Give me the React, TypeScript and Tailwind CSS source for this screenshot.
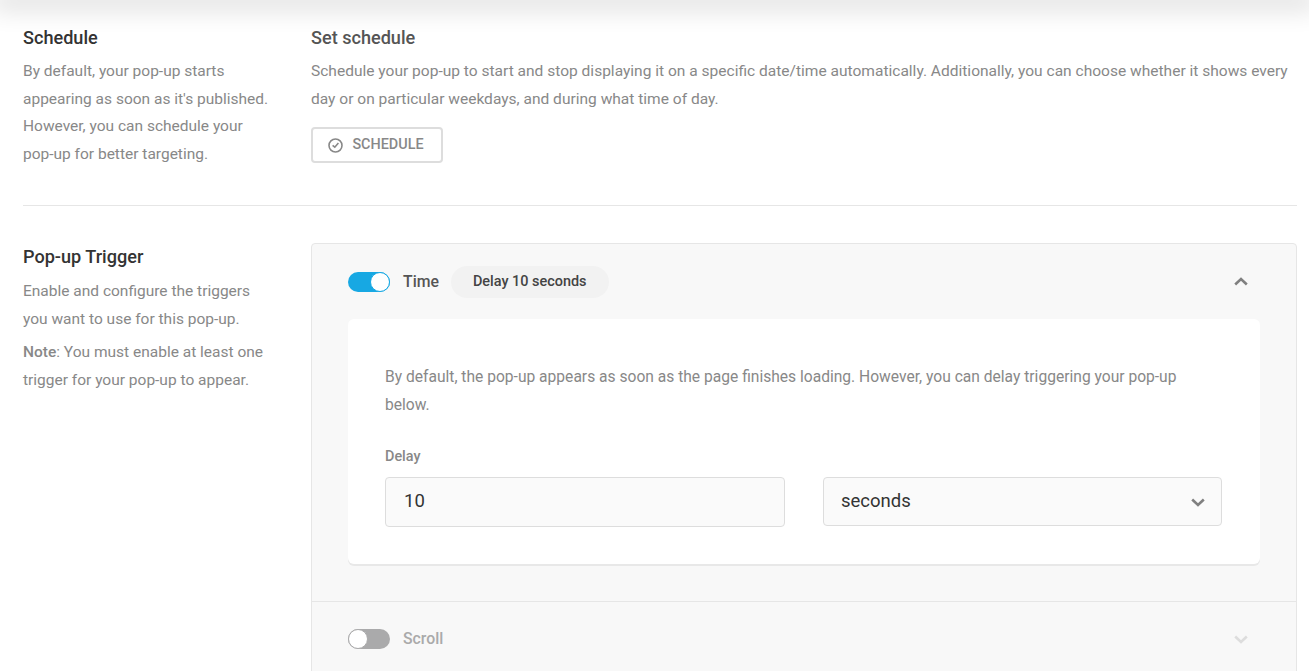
import React from "react";

function Chevron({ up = false, className = "" }: { up?: boolean; className?: string }) {
  return (
    <svg width="14" height="14" viewBox="0 0 14 14" fill="none" className={className}>
      <path d={up ? "M1.2 9.5 L7 4.1 L12.8 9.5" : "M1.2 4.5 L7 9.9 L12.8 4.5"} stroke="currentColor" strokeWidth="2.6" />
    </svg>
  );
}

function Toggle({ on }: { on: boolean }) {
  return (
    <div className={`flex h-5 w-[42px] rounded-full ${on ? "justify-end bg-[#17a8e3]" : "justify-start bg-[#aaaaab]"}`}>
      <div className={`h-5 w-5 rounded-full border bg-white ${on ? "border-[#17a8e3]" : "border-[#aaaaab]"}`} />
    </div>
  );
}

export default function App() {
  return (
    <div className="h-[671px] w-[1309px] overflow-hidden bg-white font-['Roboto',sans-serif]">
      <div className="h-0 w-full shadow-[0_0_26px_8px_rgba(0,0,0,0.16)]" />
      <div className="pl-[23px] pr-3">
        <section className="flex border-b border-[#e6e6e6] pt-[25px] h-[206px]">
          <div className="w-[288px] shrink-0">
            <h2 className="text-[18.1px] leading-[25px] font-medium text-[#333333]">Schedule</h2>
            <p className="mt-[8px] w-[250px] text-[15.5px] leading-[27.5px] text-[#888888]">
              By default, your pop-up starts appearing as soon as it's published. However, you can schedule your pop-up for better targeting.
            </p>
          </div>
          <div className="flex-1">
            <h3 className="text-[18.1px] leading-[25px] font-medium text-[#555555]">Set schedule</h3>
            <p className="mt-[8px] text-[15.54px] leading-[27.5px] text-[#888888]">
              Schedule your pop-up to start and stop displaying it on a specific date/time automatically. Additionally, you can choose whether it shows every day or on particular weekdays, and during what time of day.
            </p>
            <button className="mt-[14px] flex h-9 w-[132px] items-center justify-center gap-[9px] pr-[2px] rounded border-2 border-[#dddddd] bg-white text-[14.4px] font-medium text-[#888888]">
              <svg width="15" height="15" viewBox="0 0 15 15" fill="none" stroke="currentColor" strokeWidth="1.6">
                <circle cx="7.5" cy="7.5" r="6.5" />
                <path d="M4.6 7.4 L6.8 9.2 L10.4 5" />
              </svg>
              SCHEDULE
            </button>
          </div>
        </section>

        <section className="flex pt-[37px]">
          <div className="w-[288px] shrink-0">
            <h2 className="mt-[1px] text-[18.1px] leading-[25px] font-medium text-[#333333]">Pop-up Trigger</h2>
            <p className="mt-[9px] w-[250px] text-[15.5px] leading-[27.5px] text-[#888888]">
              Enable and configure the triggers you want to use for this pop-up.
            </p>
            <p className="mt-[6px] w-[250px] text-[15.5px] leading-[27.5px] text-[#888888]">
              <span className="font-medium">Note</span>: You must enable at least one trigger for your pop-up to appear.
            </p>
          </div>
          <div className="flex-1 rounded-t border border-[#e6e6e6] bg-[#f8f8f8]">
            <div className="border-b border-[#e6e6e6] pl-9 pr-9 pb-[37px]">
              <div className="flex h-[75px] items-center pr-3">
                <Toggle on />
                <span className="ml-[13px] text-[15.8px] font-medium text-[#555555]">Time</span>
                <span className="ml-3 flex h-8 items-center rounded-full bg-[#f2f2f2] px-[22px] text-[14.45px] font-medium text-[#444444]">
                  Delay 10 seconds
                </span>
                <Chevron up className="ml-auto text-[#808080]" />
              </div>
              <div className="h-[245px] rounded-md bg-white px-[37px] pt-[44px] shadow-[0_2px_0_0_#e8e8e8]">
                <p className="text-[15.6px] leading-[28px] text-[#888888]">
                  By default, the pop-up appears as soon as the page finishes loading. However, you can delay triggering your pop-up below.
                </p>
                <label className="mt-[26px] block text-[14.4px] leading-[24px] font-medium text-[#888888]">Delay</label>
                <div className="mt-[8px] flex gap-[38px]">
                  <div className="flex h-[50px] w-[400px] items-center rounded border border-[#dddddd] bg-[#fafafa] px-[18px] text-[18.5px] text-[#333333]">
                    10
                  </div>
                  <div className="flex h-[49px] w-[399px] items-center justify-between rounded border border-[#dddddd] bg-[#fafafa] pl-[17px] pr-4 text-[18.5px] text-[#333333]">
                    seconds
                    <Chevron className="text-[#808080]" />
                  </div>
                </div>
              </div>
            </div>
            <div className="flex h-[74px] items-center pl-9 pr-12">
              <Toggle on={false} />
              <span className="ml-[13px] text-[15.8px] font-medium text-[#aaaaaa]">Scroll</span>
              <Chevron className="ml-auto text-[#dddddd]" />
            </div>
          </div>
        </section>
      </div>
    </div>
  );
}
